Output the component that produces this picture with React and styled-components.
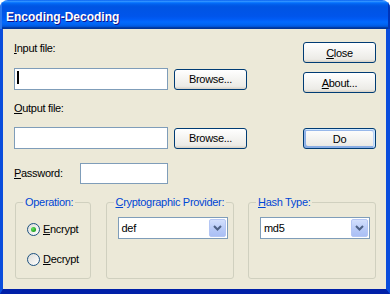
import React from "react";
import styled, { createGlobalStyle, css } from "styled-components";

const Global = createGlobalStyle`
  html, body { margin: 0; padding: 0; background: #ffffff; }
  body {
    font-family: "Liberation Sans", Arial, sans-serif;
    font-size: 11px;
    letter-spacing: -0.3px;
    color: #000;
  }
  u { text-decoration-thickness: 1px; text-underline-offset: 1px; }
`;

const Window = styled.div`
  width: 390px;
  height: 294px;
  display: flex;
  flex-direction: column;
  border-radius: 8px 8px 0 0;
  overflow: hidden;
`;

const TitleBar = styled.div`
  height: 29px;
  box-sizing: border-box;
  padding: 5px 0 0 6px;
  display: flex;
  align-items: center;
  background: linear-gradient(
    180deg,
    #0058ee 0%,
    #3593ff 4%,
    #288eff 6%,
    #127dff 8%,
    #036ffc 10%,
    #0262ee 14%,
    #0057e5 20%,
    #0054e3 24%,
    #0055eb 56%,
    #005bf5 66%,
    #026afe 76%,
    #0062ef 86%,
    #0052d6 92%,
    #0040ab 94%,
    #003092 100%
  );
  box-shadow: inset -2px 0 #0034b8, inset 2px 0 #2a78f0;
`;

const Title = styled.span`
  color: #ffffff;
  font-weight: bold;
  font-size: 12px;
  letter-spacing: 0;
  text-shadow: 1px 1px #0f1089;
`;

const Body = styled.div`
  flex: 1;
  background: #ece9d8;
  border-left: 3px solid #0a4ddc;
  border-right: 4px solid #0a4ddc;
  border-bottom: 5px solid #0020a8;
  padding: 13px 10px 0 11px;
  display: flex;
  flex-direction: column;
`;

const Top = styled.div`
  display: flex;
  justify-content: space-between;
`;

const Form = styled.div`
  width: 233px;
  display: flex;
  flex-direction: column;
`;

const Label = styled.div`
  line-height: 13px;
  height: 13px;
  margin-top: ${(p) => p.$mt || 0}px;
  white-space: nowrap;
`;

const FileRow = styled.div`
  display: flex;
  align-items: center;
  justify-content: space-between;
  height: 22px;
  margin-top: ${(p) => p.$mt || 0}px;
`;

const TextBox = styled.div`
  box-sizing: border-box;
  width: ${(p) => p.$w}px;
  height: ${(p) => p.$h || 22}px;
  background: #ffffff;
  border: 1px solid #7f9db9;
  padding-left: 2px;
  display: flex;
  align-items: flex-start;
`;

const Caret = styled.span`
  width: 2px;
  height: 13px;
  margin-top: 2px;
  background: #000;
`;

const PasswordRow = styled.div`
  display: flex;
  align-items: center;
  margin-top: 14px;
  ${Label} {
    width: 66px;
  }
`;

const Button = styled.button`
  box-sizing: border-box;
  width: 73px;
  height: 21px;
  margin: ${(p) => p.$mt || 0}px 0 0 0;
  padding: 0;
  font-family: inherit;
  font-size: 11px;
  letter-spacing: -0.3px;
  color: #000;
  background: linear-gradient(180deg, #ffffff, #ecebe6 86%, #d6d0c5);
  border: 1px solid #003c74;
  border-radius: 3px;
  ${(p) =>
    p.$default &&
    css`
      box-shadow: inset -1px 1px #cee7ff, inset 1px 2px #98b8ea,
        inset -2px 2px #bcd4f6, inset 1px -1px #89ade4,
        inset 2px -2px #89ade4;
    `}
`;

const SideButtons = styled.div`
  display: flex;
  flex-direction: column;
`;

const Groups = styled.div`
  display: flex;
  justify-content: space-between;
  margin: 18px 0 0 1px;
`;

const Group = styled.div`
  position: relative;
  box-sizing: border-box;
  width: ${(p) => p.$w}px;
  height: 77px;
  padding: ${(p) => p.$pt}px 0 0 11px;
  border: 1px solid #d0d0bf;
  border-radius: 3px;
`;

const Legend = styled.span`
  position: absolute;
  top: -7px;
  left: 7px;
  color: #0046d5;
  line-height: 13px;
  padding: 0 2px;
  background: #ece9d8;
  white-space: nowrap;
`;

const RadioList = styled.div`
  display: flex;
  flex-direction: column;
  gap: 17px;
`;

const RadioRow = styled.div`
  display: flex;
  align-items: center;
  gap: 3px;
  height: 13px;
  line-height: 13px;
`;

const RadioCircle = styled.span`
  box-sizing: border-box;
  width: 13px;
  height: 13px;
  border-radius: 50%;
  border: 1px solid #1c5180;
  background: linear-gradient(135deg, #dcdcd7, #ffffff);
  display: flex;
  align-items: center;
  justify-content: center;
  &::after {
    content: "";
    display: ${(p) => (p.$checked ? "block" : "none")};
    width: 5px;
    height: 5px;
    border-radius: 50%;
    background: radial-gradient(circle at 35% 35%, #62e25e, #21a121 70%);
  }
`;

const Combo = styled.div`
  box-sizing: border-box;
  width: 110px;
  height: 22px;
  background: #ffffff;
  border: 1px solid #7f9db9;
  display: flex;
  align-items: stretch;
  padding: 1px;
`;

const ComboText = styled.span`
  flex: 1;
  padding-left: 2px;
  display: flex;
  align-items: center;
`;

const ComboButton = styled.span`
  box-sizing: border-box;
  width: 17px;
  border: 1px solid #b4c6f4;
  border-radius: 2px;
  background: linear-gradient(180deg, #d3e0fd, #b6c9f7 60%, #aabff5);
  display: flex;
  align-items: center;
  justify-content: center;
`;

const Chevron = () => (
  <svg width="9" height="6" viewBox="0 0 9 6">
    <polyline
      points="1,1 4.5,4.5 8,1"
      fill="none"
      stroke="#4d6185"
      strokeWidth="2"
    />
  </svg>
);

const Select = ({ value }) => (
  <Combo>
    <ComboText>{value}</ComboText>
    <ComboButton>
      <Chevron />
    </ComboButton>
  </Combo>
);

export default function App() {
  return (
    <>
      <Global />
      <Window>
        <TitleBar>
          <Title>Encoding-Decoding</Title>
        </TitleBar>
        <Body>
          <Top>
            <Form>
              <Label>
                <u>I</u>nput file:
              </Label>
              <FileRow $mt={13}>
                <TextBox $w={154}>
                  <Caret />
                </TextBox>
                <Button>Browse...</Button>
              </FileRow>
              <Label $mt={12}>
                <u>O</u>utput file:
              </Label>
              <FileRow $mt={12}>
                <TextBox $w={154} />
                <Button>Browse...</Button>
              </FileRow>
              <PasswordRow>
                <Label>
                  <u>P</u>assword:
                </Label>
                <TextBox $w={88} $h={21} />
              </PasswordRow>
            </Form>
            <SideButtons>
              <Button>
                <u>C</u>lose
              </Button>
              <Button $mt={9}>
                <u>A</u>bout...
              </Button>
              <Button $mt={35} $default>
                Do
              </Button>
            </SideButtons>
          </Top>
          <Groups>
            <Group $w={76} $pt={20}>
              <Legend>Operation:</Legend>
              <RadioList>
                <RadioRow>
                  <RadioCircle $checked />
                  <span>
                    <u>E</u>ncrypt
                  </span>
                </RadioRow>
                <RadioRow>
                  <RadioCircle />
                  <span>
                    <u>D</u>ecrypt
                  </span>
                </RadioRow>
              </RadioList>
            </Group>
            <Group $w={128} $pt={14}>
              <Legend>
                <u>C</u>ryptographic Provider:
              </Legend>
              <Select value="def" />
            </Group>
            <Group $w={128} $pt={14}>
              <Legend>
                <u>H</u>ash Type:
              </Legend>
              <Select value="md5" />
            </Group>
          </Groups>
        </Body>
      </Window>
    </>
  );
}
